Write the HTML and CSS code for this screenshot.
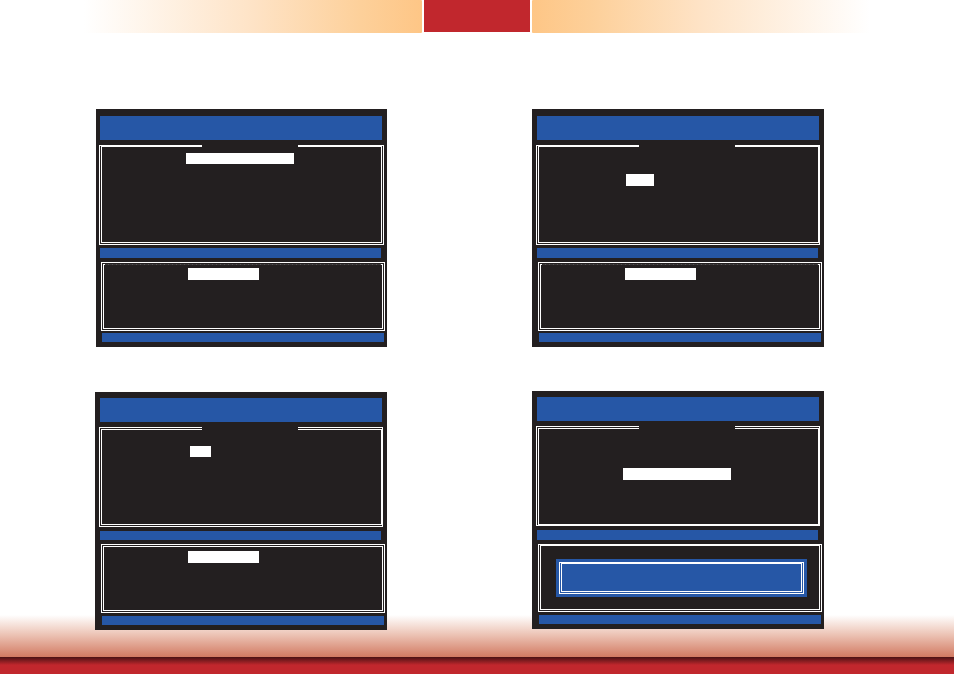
FILE: index.html
```
<!DOCTYPE html>
<html lang="en">
<head>
  <meta charset="UTF-8">
  <meta name="viewport" content="width=device-width, initial-scale=1.0">
  <title>Setup Screens</title>
  <link rel="stylesheet" href="styles.css">
</head>
<body>

  <!-- Top banner -->
  <header class="banner">
    <div class="fade fade-left"></div>
    <div class="tab"></div>
    <div class="fade fade-right"></div>
  </header>

  <main class="screens">
    <div class="column column-left">
      <section class="screen narrow">
        <div class="title-bar"></div>
        <div class="frame menu-frame thin-top menu-first">
          <div class="field field-wide"></div>
        </div>
        <div class="mid-bar"></div>
        <div class="frame info-frame dotted">
          <div class="field field-medium"></div>
        </div>
        <div class="foot-bar"></div>
      </section>

      <section class="screen lower">
        <div class="title-bar"></div>
        <div class="frame menu-frame thin-right menu-second">
          <div class="field field-tiny"></div>
        </div>
        <div class="mid-bar"></div>
        <div class="frame info-frame">
          <div class="field field-medium"></div>
        </div>
        <div class="foot-bar"></div>
      </section>
    </div>

    <div class="column column-right">
      <section class="screen">
        <div class="title-bar"></div>
        <div class="frame menu-frame thin-top thin-right menu-third">
          <div class="field field-small"></div>
        </div>
        <div class="mid-bar"></div>
        <div class="frame info-frame dotted">
          <div class="field field-medium"></div>
        </div>
        <div class="foot-bar"></div>
      </section>

      <section class="screen lower">
        <div class="title-bar"></div>
        <div class="frame menu-frame thin-right thin-bottom menu-fourth">
          <div class="field field-wide"></div>
        </div>
        <div class="mid-bar"></div>
        <div class="frame info-frame thin-top dialog-frame">
          <div class="dialog">
            <div class="frame thin-top dialog-border"></div>
          </div>
        </div>
        <div class="foot-bar"></div>
      </section>
    </div>
  </main>

  <footer class="page-footer">
    <div class="glow"></div>
    <div class="strip"></div>
  </footer>

</body>
</html>
```

FILE: styles.css
```
* {
  box-sizing: border-box;
}

body {
  margin: 0;
  min-height: 100vh;
  display: flex;
  flex-direction: column;
  background-color: #fff;
  font-family: "Liberation Sans", Arial, sans-serif;
}

/* Banner */
.banner {
  display: flex;
  gap: 2px;
  padding: 0 84px;
}

.fade {
  flex: 1;
  height: 33px;
}

.fade-left {
  background: linear-gradient(to left, #fec686, #fdd09a 18%, #fee3c6 50%, #fff);
  border-radius: 0 1px 1px 0;
}

.fade-right {
  background: linear-gradient(to right, #fec686, #fdd09a 18%, #fee3c6 50%, #fff);
  border-radius: 1px 0 0 1px;
}

.tab {
  width: 106px;
  height: 32px;
  background-color: #c1272d;
}

/* Screens */
.screens {
  display: grid;
  grid-template-columns: 1fr 1fr;
  column-gap: 145px;
  padding: 76px 130px 0 95px;
}

.column {
  display: flex;
  flex-direction: column;
}

.column-left {
  gap: 45px;
}

.column-right {
  gap: 44px;
}

.screen {
  position: relative;
  z-index: 1;
  padding: 7px 2px 5px 4px;
  background-color: #231f20;
}

.screen.narrow {
  margin-left: 1px;
  padding-left: 3px;
}

.screen.lower {
  padding-top: 6px;
}

.title-bar,
.mid-bar,
.foot-bar {
  background-color: #2657a6;
}

.title-bar {
  height: 24px;
  margin: 0 3px 5px 1px;
}

.mid-bar {
  height: 10px;
  margin: 3px 4px 4px 1px;
}

.foot-bar {
  height: 9px;
  margin: 2px 1px 0 3px;
}

.lower .mid-bar {
  margin-top: 4px;
}

.column-left .lower .mid-bar {
  height: 9px;
}

.lower .foot-bar {
  margin-top: 3px;
}

.frame {
  position: relative;
  border: 3px double #fff;
}

.thin-top {
  border-top: 2px solid #fff;
}

.thin-right {
  border-right: 2px solid #fff;
}

.thin-bottom {
  border-bottom: 2px solid #fff;
}

.menu-frame {
  height: 100px;
  margin-right: 2px;
}

.narrow .menu-frame {
  margin-right: 1px;
}

/* gap in the top border where the heading sits */
.menu-frame::before {
  content: "";
  position: absolute;
  top: -3px;
  left: 100px;
  width: 96px;
  height: 3px;
  background-color: #231f20;
}

.info-frame {
  height: 69px;
  margin-left: 2px;
  padding: 3px 0 0 84px;
}

.lower .info-frame {
  padding-top: 4px;
}

.dotted::before {
  content: "";
  position: absolute;
  top: -1px;
  left: 1px;
  right: 1px;
  height: 1px;
  background: repeating-linear-gradient(to right, #3a3738 0 3px, #555253 3px 4px);
}

.menu-first {
  padding: 6px 0 0 84px;
}

.menu-second {
  padding: 16px 0 0 88px;
}

.menu-third {
  padding: 27px 0 0 87px;
}

.menu-fourth {
  padding: 39px 0 0 84px;
}

.field {
  height: 12px;
  background-color: #fff;
}

.menu-first .field,
.menu-second .field {
  height: 11px;
}

.field-wide {
  width: 108px;
}

.field-medium {
  width: 71px;
}

.field-small {
  width: 28px;
}

.field-tiny {
  width: 21px;
}

/* Dialog */
.lower .dialog-frame {
  height: 68px;
  padding: 13px 12px 0 15px;
}

.dialog {
  padding: 3px;
  background-color: #2657a6;
}

.dialog-border {
  height: 32px;
}

/* Footer, runs up behind the lower screens */
.page-footer {
  margin-top: auto;
}

.glow {
  height: 42px;
  margin-top: -15px;
  background: linear-gradient(to bottom, #fff, #edc6b8 45%, #d27a62);
}

.strip {
  height: 17px;
  background: linear-gradient(to bottom, #4a1214, #c1272d 8px);
}
```
